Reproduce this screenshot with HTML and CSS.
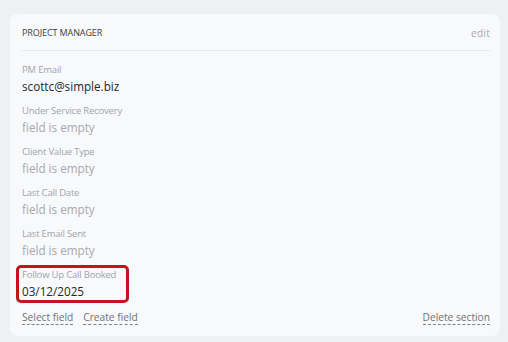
FILE: index.html
```html
<!DOCTYPE html>
<html lang="en">
<head>
  <meta charset="UTF-8">
  <meta name="viewport" content="width=device-width, initial-scale=1.0">
  <title>Project Manager</title>
  <link rel="stylesheet" href="styles.css">
</head>
<body>

  <div class="section-card">
    <!-- Header -->
    <div class="section-header">
      <span class="section-title">PROJECT MANAGER</span>
      <span class="edit-link">edit</span>
    </div>

    <!-- Fields -->
    <div class="field-list">
      <div class="field">
        <div class="field-label">PM Email</div>
        <div class="field-value">scottc@simple.biz</div>
      </div>
      <div class="field">
        <div class="field-label">Under Service Recovery</div>
        <div class="field-value empty">field is empty</div>
      </div>
      <div class="field">
        <div class="field-label">Client Value Type</div>
        <div class="field-value empty">field is empty</div>
      </div>
      <div class="field">
        <div class="field-label">Last Call Date</div>
        <div class="field-value empty">field is empty</div>
      </div>
      <div class="field">
        <div class="field-label">Last Email Sent</div>
        <div class="field-value empty">field is empty</div>
      </div>
      <div class="field highlighted">
        <div class="field-label">Follow Up Call Booked</div>
        <div class="field-value">03/12/2025</div>
      </div>
    </div>

    <!-- Footer -->
    <div class="section-footer">
      <div class="footer-left">
        <span class="dashed-link">Select field</span>
        <span class="dashed-link">Create field</span>
      </div>
      <span class="dashed-link">Delete section</span>
    </div>
  </div>

</body>
</html>
```

FILE: styles.css
```css
* {
  margin: 0;
  padding: 0;
  box-sizing: border-box;
}
body {
  font-family: 'Open Sans', 'Noto Sans', sans-serif;
  background-color: #eef1f4;
  width: 508px;
  height: 342px;
  overflow: hidden;
}
.section-card {
  margin: 14px 8px 0 10px;
  padding: 0 10px 10px 12px;
  height: 322px;
  background-color: #f8f9fb;
  border-radius: 8px;
}
.section-header {
  height: 37px;
  display: flex;
  justify-content: space-between;
  align-items: center;
  padding-top: 1px;
  border-bottom: 1px solid #e5e8ec;
}
.section-title {
  font-size: 9px;
  color: #3b3f45;
  letter-spacing: -0.1px;
}
.edit-link {
  font-size: 10px;
  color: #a4a8ad;
  letter-spacing: 0.3px;
}
.field-list {
  padding-top: 12px;
  display: flex;
  flex-direction: column;
  gap: 9px;
}
.field {
  display: flex;
  flex-direction: column;
  width: fit-content;
}
.field-label {
  font-size: 9.5px;
  line-height: 14px;
  color: #a0a4a9;
  letter-spacing: -0.2px;
}
.field-value {
  font-size: 11.7px;
  line-height: 18px;
  color: #24272b;
}
.field-value.empty {
  color: #a5a9ae;
}
.highlighted {
  width: 107px;
  margin-left: -3px;
  padding: 0 3px;
  outline: 3px solid #c4121e;
  border-radius: 2px;
}
.section-footer {
  margin-top: 10px;
  display: flex;
  justify-content: space-between;
  align-items: center;
}
.footer-left {
  display: flex;
  gap: 10px;
}
.dashed-link {
  font-size: 10.2px;
  line-height: 14px;
  color: #6d7278;
  border-bottom: 1px dashed #7d8288;
}
```
